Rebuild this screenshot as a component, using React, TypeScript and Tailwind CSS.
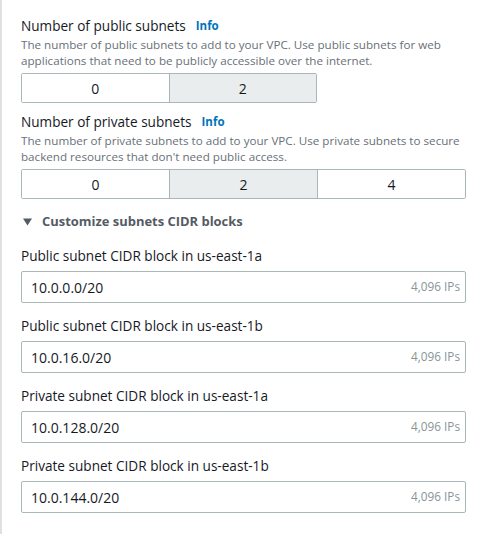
import React from "react";

type Cidr = { label: string; value: string };

const cidrs: Cidr[] = [
  { label: "Public subnet CIDR block in us-east-1a", value: "10.0.0.0/20" },
  { label: "Public subnet CIDR block in us-east-1b", value: "10.0.16.0/20" },
  { label: "Private subnet CIDR block in us-east-1a", value: "10.0.128.0/20" },
  { label: "Private subnet CIDR block in us-east-1b", value: "10.0.144.0/20" },
];

const Segmented = ({ options, selected, width }: { options: string[]; selected: string; width: string }) => (
  <div className={`flex h-[30px] border border-[#aab7b8] rounded-[2px] ${width}`}>
    {options.map((opt, i) => (
      <div
        key={opt}
        className={`flex-1 flex items-center justify-center text-[14px] text-[#16191f] ${
          i > 0 ? "border-l border-[#aab7b8]" : ""
        } ${opt === selected ? "bg-[#eaeded]" : "bg-white"}`}
      >
        {opt}
      </div>
    ))}
  </div>
);

const FieldHeader = ({ title, lines }: { title: string; lines: string[] }) => (
  <div>
    <div className="flex items-center gap-[10px] h-[22px]">
      <span className="text-[13.6px] text-[#16191f]">{title}</span>
      <span className="text-[11.5px] font-bold text-[#0073bb]">Info</span>
    </div>
    <div className="text-[11.65px] leading-[16px] text-[#687078] whitespace-nowrap">
      {lines.map((l) => (
        <div key={l}>{l}</div>
      ))}
    </div>
  </div>
);

export default function App() {
  return (
    <div className="w-[486px] h-[534px] bg-white border-l-2 border-[#dde1e1] pl-[19px] pr-[20px] pt-[15px] font-['Open_Sans','Noto_Sans',sans-serif]">
      <FieldHeader
        title="Number of public subnets"
        lines={[
          "The number of public subnets to add to your VPC. Use public subnets for web",
          "applications that need to be publicly accessible over the internet.",
        ]}
      />
      <div className="mt-[4px]">
        <Segmented options={["0", "2"]} selected="2" width="w-[296px]" />
      </div>

      <div className="mt-[8px]">
        <FieldHeader
          title="Number of private subnets"
          lines={[
            "The number of private subnets to add to your VPC. Use private subnets to secure",
            "backend resources that don't need public access.",
          ]}
        />
      </div>
      <div className="mt-[4px]">
        <Segmented options={["0", "2", "4"]} selected="2" width="w-full" />
      </div>

      <div className="flex items-center gap-[10px] mt-[11px] h-[24px] pl-[2px]">
        <svg width="9" height="8" viewBox="0 0 9 8">
          <path d="M0 0.5 L9 0.5 L4.5 7.5 Z" fill="#545b64" />
        </svg>
        <span className="text-[12.95px] font-bold text-[#545b64]">Customize subnets CIDR blocks</span>
      </div>

      <div className="flex flex-col gap-[12px] mt-[11px]">
        {cidrs.map((c) => (
          <div key={c.label} className="flex flex-col">
            <label className="text-[13.6px] text-[#16191f] h-[22px] flex items-center">{c.label}</label>
            <div className="mt-[4px] h-[32px] border border-[#aab7b8] rounded-[2px] flex items-center justify-between pl-[9px] pr-[5px]">
              <span className="text-[14px] text-[#16191f]">{c.value}</span>
              <span className="text-[11.75px] text-[#879596]">4,096 IPs</span>
            </div>
          </div>
        ))}
      </div>
    </div>
  );
}
